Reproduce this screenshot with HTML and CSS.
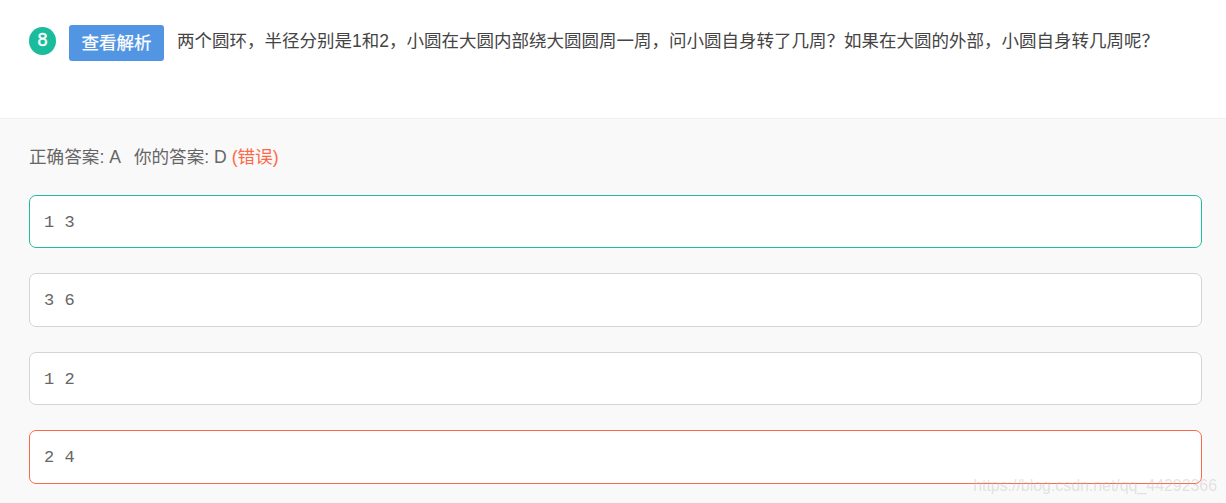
FILE: index.html
```html
<!DOCTYPE html>
<html lang="zh">
<head>
<meta charset="utf-8">
<title>题目</title>
<link rel="stylesheet" href="styles.css">
</head>
<body>
<div class="page">
  <header class="question">
    <span class="num">8</span>
    <button class="btn">查看解析</button>
    <p class="qtext">两个圆环，半径分别是1和2，小圆在大圆内部绕大圆圆周一周，问小圆自身转了几周？如果在大圆的外部，小圆自身转几周呢？</p>
  </header>
  <section class="answers">
    <p class="result">正确答案: A<span class="yours">你的答案: D</span> <span class="wrong">(错误)</span></p>
    <div class="opt opt-right">1 3</div>
    <div class="opt">3 6</div>
    <div class="opt">1 2</div>
    <div class="opt opt-wrong">2 4</div>
  </section>
  <div class="mark">https://blog.csdn.net/qq_44292366</div>
</div>
</body>
</html>
```
FILE: styles.css
```css
* { box-sizing: border-box; }
html, body { margin: 0; padding: 0; }
body {
  width: 1226px;
  height: 503px;
  overflow: hidden;
  background: #f9f9f9;
  font-family: "Liberation Sans", "Noto Sans CJK SC", sans-serif;
}
.page { position: relative; width: 1226px; height: 503px; overflow: hidden; }
.question {
  display: flex;
  align-items: flex-start;
  height: 119px;
  padding: 25px 0 0 29px;
  background: #fff;
  border-bottom: 1px solid #eeeeee;
}
.num {
  flex: none;
  width: 27px;
  height: 28px;
  margin-top: 2px;
  border-radius: 50%;
  background: #1abc9c;
  color: #fff;
  font-size: 18px;
  line-height: 26px;
  text-align: center;
  -webkit-text-stroke: 0.4px #fff;
}
.btn {
  flex: none;
  width: 95px;
  height: 36px;
  margin-left: 13px;
  padding: 0;
  border: 0;
  border-radius: 3px;
  background: #5295e3;
  color: #fff;
  font: 17.5px/36px "Liberation Sans", "Noto Sans CJK SC", sans-serif;
  -webkit-text-stroke: 0.25px #fff;
}
.qtext {
  margin: 1px 0 0 13px;
  font-size: 17.5px;
  line-height: 30px;
  color: #444;
  white-space: nowrap;
}
.answers { padding: 23px 24px 0 29px; }
.result {
  margin: 0 0 23px;
  font-size: 17.6px;
  line-height: 30px;
  color: #666;
  white-space: nowrap;
}
.yours { margin-left: 13px; }
.wrong { color: #fd6948; }
.opt {
  height: 53.4px;
  margin-bottom: 25px;
  padding-left: 14px;
  background: #fff;
  border: 1px solid #d4d4d4;
  border-radius: 7px;
  font-family: "Liberation Mono", monospace;
  font-size: 17px;
  line-height: 53px;
  color: #666;
  white-space: pre;
}
.opt-right { border-color: #1ebc9c; }
.opt-wrong { border-color: #fd6948; }
.mark {
  position: absolute;
  right: 9px;
  bottom: 7px;
  font-size: 15.9px;
  line-height: 20px;
  color: rgba(190, 190, 190, 0.4);
  white-space: nowrap;
}
```
